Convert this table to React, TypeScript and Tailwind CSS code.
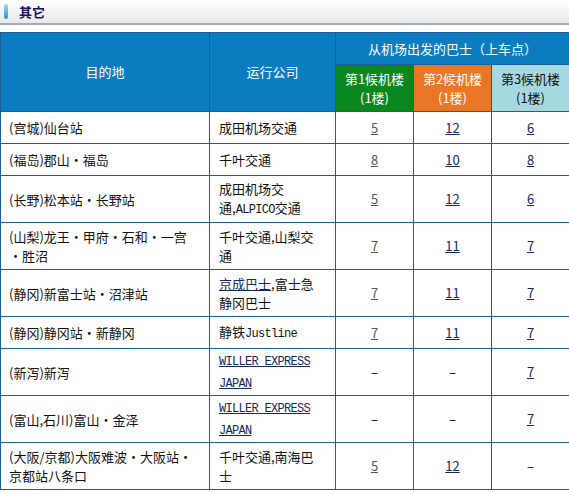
import React from "react";

type Row = {
  dest: string[];
  company: React.ReactNode[];
  t1: string;
  t2: string;
  t3: string;
  h: string;
};

const Link = ({ children }: { children: React.ReactNode }) => (
  <span className="text-[#14285e] underline">{children}</span>
);

const Mono = ({ children, link }: { children: React.ReactNode; link?: boolean }) => (
  <span
    className={
      link
        ? "text-[#14285e] underline font-['Liberation_Mono',monospace] text-[12px] tracking-[-0.7px]"
        : "font-['Liberation_Mono',monospace] text-[12px] tracking-[-0.7px]"
    }
  >
    {children}
  </span>
);

const rows: Row[] = [
  { dest: ["(宫城)仙台站"], company: ["成田机场交通"], t1: "5", t2: "12", t3: "6", h: "h-[32px]" },
  { dest: ["(福岛)郡山・福岛"], company: ["千叶交通"], t1: "8", t2: "10", t3: "8", h: "h-[32px]" },
  {
    dest: ["(长野)松本站・长野站"],
    company: [
      "成田机场交",
      <>
        通,<Mono>ALPICO</Mono>交通
      </>,
    ],
    t1: "5",
    t2: "12",
    t3: "6",
    h: "h-[47px]",
  },
  {
    dest: ["(山梨)龙王・甲府・石和・一宫", "・胜沼"],
    company: ["千叶交通,山梨交", "通"],
    t1: "7",
    t2: "11",
    t3: "7",
    h: "h-[47px]",
  },
  {
    dest: ["(静冈)新富士站・沼津站"],
    company: [
      <>
        <Link>京成巴士</Link>,富士急
      </>,
      "静冈巴士",
    ],
    t1: "7",
    t2: "11",
    t3: "7",
    h: "h-[47px]",
  },
  {
    dest: ["(静冈)静冈站・新静冈"],
    company: [
      <>
        静铁<Mono>Justline</Mono>
      </>,
    ],
    t1: "7",
    t2: "11",
    t3: "7",
    h: "h-[32px]",
  },
  {
    dest: ["(新泻)新泻"],
    company: [<Mono link>WILLER EXPRESS</Mono>, <Mono link>JAPAN</Mono>],
    t1: "–",
    t2: "–",
    t3: "7",
    h: "h-[47px]",
  },
  {
    dest: ["(富山,石川)富山・金泽"],
    company: [<Mono link>WILLER EXPRESS</Mono>, <Mono link>JAPAN</Mono>],
    t1: "–",
    t2: "–",
    t3: "7",
    h: "h-[47px]",
  },
  {
    dest: ["(大阪/京都)大阪难波・大阪站・", "京都站八条口"],
    company: ["千叶交通,南海巴", "士"],
    t1: "5",
    t2: "12",
    t3: "–",
    h: "h-[47px]",
  },
];

const Num = ({ v, gray }: { v: string; gray?: boolean }) => {
  if (v === "–") return <span className="text-black">–</span>;
  return <span className={gray ? "text-[#555] underline" : "text-[#14285e] underline"}>{v}</span>;
};

const cell = "border border-[#1b5d96]";

export default function App() {
  return (
    <div className="w-[569px] h-[494px] bg-white font-['Noto_Sans_CJK_SC',sans-serif] text-[13px] text-[#111]">
      {/* title bar */}
      <div className="h-[25px] flex items-center gap-[11px] pl-[4px] bg-gradient-to-b from-white to-[#e6eaec] border-b-2 border-[#a9a9a9]">
        <div className="w-[4px] h-[15px] rounded-sm bg-gradient-to-b from-[#9fd4f5] to-[#2a8fd8]" />
        <span className="font-bold text-[13px] text-[#1a1060]">其它</span>
      </div>

      <div className="pt-[7px]">
        <table className="w-[569px] border-collapse table-fixed">
          <colgroup>
            <col className="w-[209px]" />
            <col className="w-[126px]" />
            <col className="w-[78px]" />
            <col className="w-[78px]" />
            <col className="w-[78px]" />
          </colgroup>
          <thead>
            <tr className="h-[32px]">
              <th rowSpan={2} className={`bg-[#0c7cc1] text-white font-normal ${cell}`}>
                目的地
              </th>
              <th rowSpan={2} className={`bg-[#0c7cc1] text-white font-normal ${cell}`}>
                运行公司
              </th>
              <th colSpan={3} className={`bg-[#0c7cc1] text-white font-normal ${cell}`}>
                从机场出发的巴士（上车点）
              </th>
            </tr>
            <tr className="h-[47px] leading-[19px]">
              <th className={`bg-[#0b8720] text-white font-normal ${cell}`}>
                <div>第1候机楼</div>
                <div>(1楼)</div>
              </th>
              <th className={`bg-[#e97725] text-white font-normal ${cell}`}>
                <div>第2候机楼</div>
                <div>(1楼)</div>
              </th>
              <th className={`bg-[#a6d8e1] text-[#111] font-normal ${cell}`}>
                <div>第3候机楼</div>
                <div>(1楼)</div>
              </th>
            </tr>
          </thead>
          <tbody>
            {rows.map((r, i) => (
              <tr key={i} className={r.h}>
                <td className={`${cell} pl-[8px] leading-[19px]`}>
                  {r.dest.map((d, j) => (
                    <div key={j}>{d}</div>
                  ))}
                </td>
                <td className={`${cell} pl-[9px] leading-[19px]`}>
                  {r.company.map((c, j) => (
                    <div key={j}>{c}</div>
                  ))}
                </td>
                <td className={`${cell} text-center`}>
                  <Num v={r.t1} gray />
                </td>
                <td className={`${cell} text-center`}>
                  <Num v={r.t2} />
                </td>
                <td className={`${cell} text-center`}>
                  <Num v={r.t3} />
                </td>
              </tr>
            ))}
          </tbody>
        </table>
      </div>
    </div>
  );
}
